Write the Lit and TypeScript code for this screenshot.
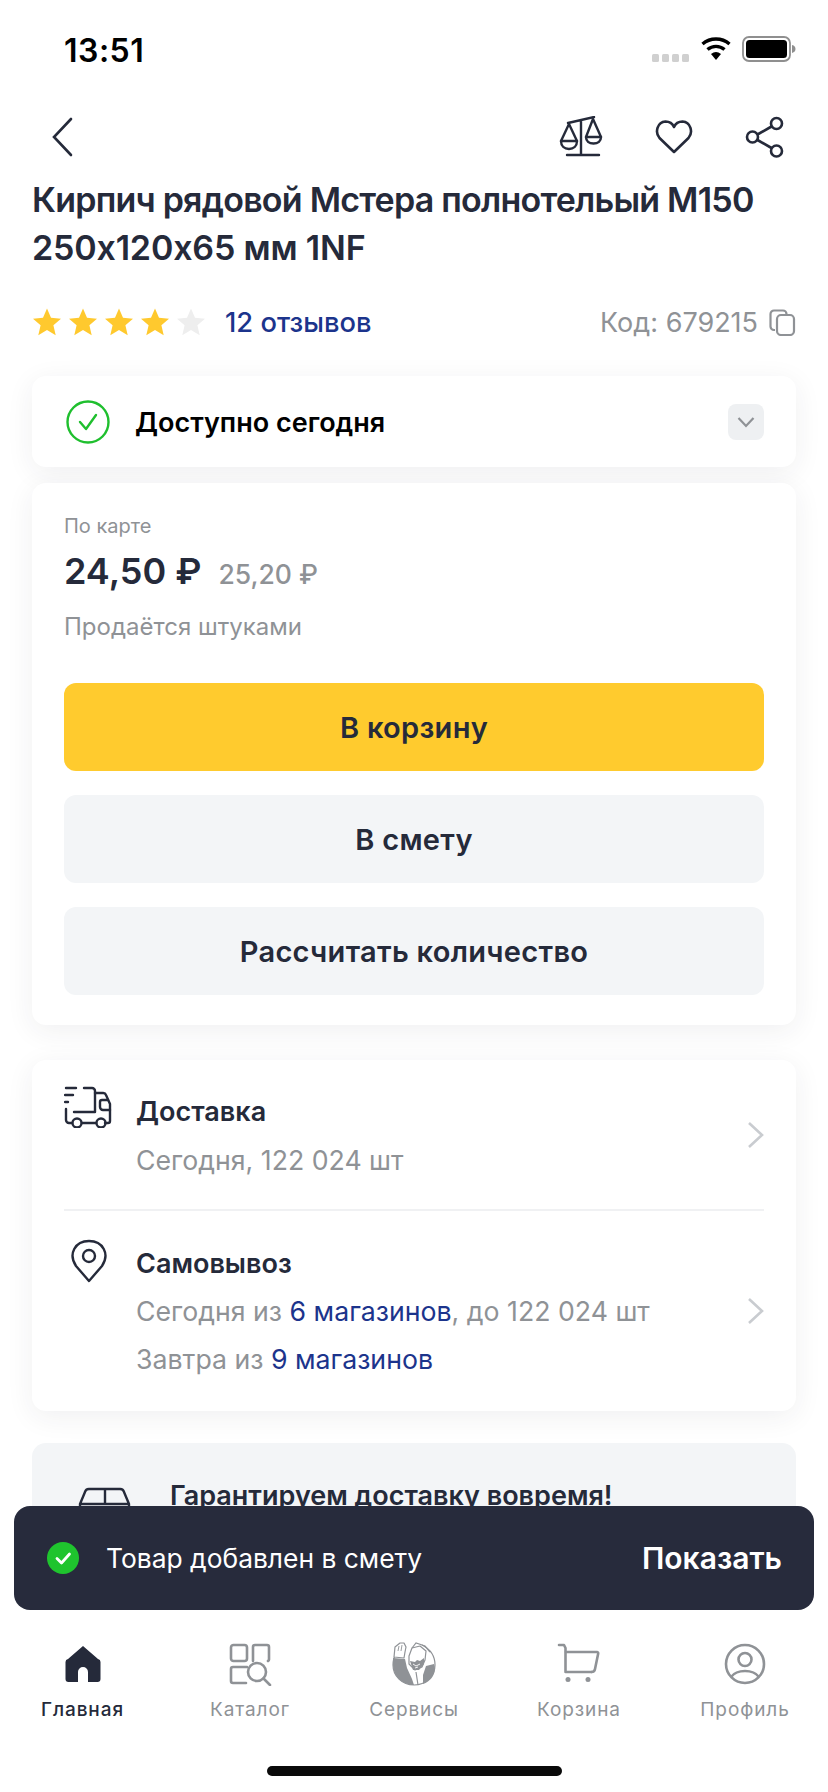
import { LitElement, html, css, svg } from 'lit';
import { customElement } from 'lit/decorators.js';

const DARK = '#252a3a';
const GRAY = '#8f9296';

const star = (fill: string) => html`
  <svg width="30" height="30" viewBox="0 0 30 30">
    <path fill=${fill} d="M15 1.500l4 9.200 10 1-7.600 6.600 2.300 9.900L15 23l-8.700 5.200 2.300-9.900L1 11.700l10-1z" />
  </svg>
`;

const chevron = html`
  <svg width="18" height="28" viewBox="0 0 18 28" fill="none" stroke="#c9ccd0" stroke-width="2.600">
    <path d="M3 2l13 12L3 26" />
  </svg>
`;

const tabIcons: Record<string, unknown> = {
  home: html`<svg width="44" height="44" viewBox="0 0 44 44">
    <path fill=${DARK} d="M22 4L37 17a3 3 0 0 1 2.500 3V37a3 3 0 0 1-3 3H27V30a5 5 0 0 0-10 0V40H7.500a3 3 0 0 1-3-3V20a3 3 0 0 1 2.500-3z" />
  </svg>`,
  catalog: html`<svg width="44" height="44" viewBox="0 0 44 44" fill="none" stroke=${GRAY} stroke-width="2.600" stroke-linecap="round" stroke-linejoin="round">
    <rect x="3" y="3" width="16" height="16" rx="2.500" />
    <path d="M25 19V5a2 2 0 0 1 2-2h12a2 2 0 0 1 2 2v12a2 2 0 0 1-1 2" />
    <path d="M19 25H5a2 2 0 0 0-2 2v12a2 2 0 0 0 2 2h13" />
    <circle cx="29" cy="30" r="9" />
    <path d="M35.500 36.500L42 43" />
  </svg>`,
  services: html`<svg width="44" height="44" viewBox="0 0 44 44">
    <path fill="none" stroke=${GRAY} stroke-width="1.200" d="M14 5C5 8 1 15 1 23c0 11 9 20 21 20s21-9 21-20c0-9-5-16-13-20" />
    <path fill=${GRAY} d="M1 16l12 1 2 9 5 11 2 6C10 43 1 34 1 22z" />
    <path fill=${GRAY} d="M31 33l3-9 8-2c3 8-2 17-11 20z" />
    <path fill="#fff" stroke=${GRAY} stroke-width="1.200" stroke-linejoin="round" d="M2 15l1-10 5-4 4 0 2 4-1 5-1 6z" />
    <path fill="none" stroke=${GRAY} stroke-width="0.900" d="M6 9l1-5M9 9l1-6" />
    <path fill="#fff" stroke=${GRAY} stroke-width="1.200" stroke-linejoin="round" d="M17 14l3-8 8-2 6 5-1 9-3 7-7 3-6-6z" />
    <path fill=${GRAY} d="M18 19l5 1 2-2 3 1 4-3 0 6-5 6-6 0z" />
    <path fill="none" stroke="#fff" stroke-width="0.900" d="M21 22l3 2 4-2M23 26l3-1" />
    <path fill="none" stroke=${GRAY} stroke-width="1.200" d="M20 6l4-5 9 3 5 6M24 30l2 13" />
  </svg>`,
  cart: html`<svg width="44" height="44" viewBox="0 0 44 44" fill="none" stroke=${GRAY} stroke-width="2.600" stroke-linecap="round" stroke-linejoin="round">
    <path d="M2 3h5l1.500 3v24h26" />
    <path d="M9 10h31a1.200 1.200 0 0 1 1.200 1.500L38 27a3.500 3.500 0 0 1-3.500 3" />
    <circle cx="11" cy="37.500" r="2.500" fill=${GRAY} stroke="none" />
    <circle cx="31" cy="37.500" r="2.500" fill=${GRAY} stroke="none" />
  </svg>`,
  profile: html`<svg width="44" height="44" viewBox="0 0 44 44" fill="none" stroke=${GRAY} stroke-width="2.600">
    <circle cx="22" cy="22" r="19" />
    <circle cx="22" cy="17.500" r="6.500" />
    <path d="M8 35c3-4 8-6 14-6s11 2 14 6" />
  </svg>`,
};

const tabs = [
  { id: 'home', label: 'Главная', active: true },
  { id: 'catalog', label: 'Каталог', active: false },
  { id: 'services', label: 'Сервисы', active: false },
  { id: 'cart', label: 'Корзина', active: false },
  { id: 'profile', label: 'Профиль', active: false },
];

@customElement('app-root')
export class AppRoot extends LitElement {
  static styles = css`
    :host {
      display: block;
      width: 828px;
      height: 1792px;
      overflow: hidden;
      position: relative;
      background: #fff;
      font-family: Inter, 'Noto Sans', sans-serif;
      color: #252a3a;
    }

    .page {
      height: 100%;
      display: flex;
      flex-direction: column;
    }

    .status {
      height: 98px;
      flex: none;
      display: flex;
      align-items: center;
      justify-content: space-between;
      padding: 0 32px 0 64px;
      box-sizing: border-box;
    }

    .time {
      font-size: 32px;
      font-weight: 600;
      color: #000;
      letter-spacing: 0.5px;
      margin-top: 2px;
    }

    .status-right {
      display: flex;
      align-items: center;
      gap: 10px;
    }

    .signal {
      margin-top: 19px;
    }

    .nav {
      height: 78px;
      flex: none;
      display: flex;
      align-items: center;
      justify-content: space-between;
      padding: 0 43px 0 50px;
      box-sizing: border-box;
    }

    .nav-actions {
      display: flex;
      align-items: center;
      gap: 52px;
    }

    .content {
      flex: 1;
      min-height: 0;
      overflow: hidden;
    }

    h1 {
      margin: 0;
      padding: 0 32px;
      font-size: 34px;
      line-height: 48px;
      font-weight: 600;
      letter-spacing: -0.77px;
      color: #252a3a;
      white-space: nowrap;
    }

    h1 span {
      letter-spacing: -0.17px;
    }

    .meta {
      display: flex;
      align-items: center;
      justify-content: space-between;
      padding: 0 32px;
      margin-top: 28px;
      height: 44px;
    }

    .rating {
      display: flex;
      align-items: center;
    }

    .stars {
      display: flex;
      gap: 6px;
      margin-right: 19px;
    }

    .reviews {
      font-size: 27.300px;
      font-weight: 500;
      color: #1c348c;
    }

    .code {
      display: flex;
      align-items: center;
      gap: 11px;
      font-size: 27px;
      color: #8f9296;
    }

    .card {
      margin: 0 32px;
      background: #fff;
      border-radius: 14px;
      box-shadow: 0 6px 28px rgba(37, 42, 58, 0.07);
    }

    .avail {
      margin-top: 32px;
      height: 91px;
      box-sizing: border-box;
      padding: 0 32px 0 34px;
      display: flex;
      align-items: center;
    }

    .avail-text {
      margin: 2px 0 0 25px;
      flex: 1;
      font-size: 27px;
      font-weight: 600;
      color: #000;
    }

    .avail-toggle {
      width: 36px;
      height: 36px;
      border-radius: 8px;
      background: #eef0f2;
      display: flex;
      align-items: center;
      justify-content: center;
    }

    .buy {
      margin-top: 16px;
      padding: 31px 32px 32px;
      height: 542px;
      box-sizing: border-box;
      display: flex;
      flex-direction: column;
    }

    .by-card {
      font-size: 20px;
      line-height: 24px;
      color: #8f9296;
    }

    .prices {
      display: flex;
      align-items: baseline;
      gap: 17px;
      margin-top: 8px;
    }

    .price {
      font-size: 36px;
      line-height: 50px;
      font-weight: 600;
      color: #252a3a;
    }

    .old-price {
      font-size: 26.500px;
      font-weight: 500;
      color: #8f9296;
    }

    .unit {
      margin-top: 15px;
      font-size: 24px;
      line-height: 32px;
      color: #8f9296;
    }

    .btn {
      height: 88px;
      flex: none;
      border-radius: 12px;
      background: #f3f5f7;
      display: flex;
      align-items: center;
      justify-content: center;
      font-size: 29px;
      font-weight: 600;
      letter-spacing: 0.3px;
      color: #252a3a;
      margin-top: 24px;
    }

    .btn.primary {
      background: #ffcb2e;
      margin-top: 40px;
    }

    .ship {
      margin-top: 35px;
      height: 351px;
      box-sizing: border-box;
      padding: 0 32px;
    }

    .ship-row {
      display: flex;
      align-items: center;
    }

    .ship-row.delivery {
      height: 149px;
      border-bottom: 2px solid #f0f1f3;
    }

    .ship-row.pickup {
      height: 200px;
    }

    .ship-icon {
      width: 72px;
      flex: none;
      align-self: flex-start;
    }

    .delivery .ship-icon {
      margin-top: 26px;
    }

    .pickup .ship-icon {
      margin-top: 28px;
      padding-left: 6px;
      width: 66px;
    }

    .ship-body {
      flex: 1;
      align-self: flex-start;
    }

    .delivery .ship-body {
      padding-top: 34px;
    }

    .pickup .ship-body {
      padding-top: 35px;
    }

    .ship-title {
      font-size: 27px;
      line-height: 36px;
      font-weight: 600;
      color: #252a3a;
    }

    .ship-line {
      font-size: 26.700px;
      line-height: 48px;
      color: #8f9296;
    }

    .delivery .ship-line {
      margin-top: 6px;
    }

    .pickup .ship-title + .ship-line {
      margin-top: 5px;
    }

    .ship-line a {
      color: #1c348c;
      text-decoration: none;
    }

    .guarantee {
      margin: 32px 32px 0;
      height: 160px;
      background: #f3f5f7;
      border-radius: 14px;
      display: flex;
      align-items: flex-start;
      padding: 37px 0 0 46px;
      box-sizing: border-box;
    }

    .guarantee svg {
      flex: none;
      margin-top: 7px;
    }

    .guarantee-text {
      margin-left: 38px;
      font-size: 27px;
      line-height: 32px;
      font-weight: 600;
      color: #252a3a;
    }

    .toast {
      position: absolute;
      left: 14px;
      right: 14px;
      top: 1506px;
      height: 104px;
      box-sizing: border-box;
      border-radius: 16px;
      background: #272b3c;
      display: flex;
      align-items: center;
      padding: 0 32px 0 33px;
      color: #fff;
    }

    .toast-text {
      flex: 1;
      margin-left: 27px;
      font-size: 26.400px;
    }

    .toast-action {
      font-size: 30px;
      font-weight: 600;
    }

    .tabbar {
      flex: none;
      height: 184px;
      background: #fff;
      box-sizing: border-box;
      padding: 34px 0 0;
      position: relative;
      display: grid;
      grid-template-columns: 165px 170px 158px 172px 160px;
    }

    .tab {
      display: flex;
      flex-direction: column;
      align-items: center;
      font-size: 19px;
      line-height: 24px;
      letter-spacing: 0.9px;
      color: #8f9296;
    }

    .tab.active {
      color: #252a3a;
      font-weight: 500;
    }

    .tab span {
      margin-top: 12px;
    }

    .home-bar {
      position: absolute;
      left: 267px;
      top: 158px;
      width: 295px;
      height: 10px;
      border-radius: 5px;
      background: #0a0a0a;
    }
  `;

  render() {
    return html`
      <div class="page">
        <div class="status">
          <span class="time">13:51</span>
          <div class="status-right">
            <svg class="signal" width="38" height="12" viewBox="0 0 38 12">
              ${[0, 10, 20, 30].map((x) => svg`<rect x=${x} y="1" width="7" height="8" rx="1.500" fill="#d0d0d0" />`)}
            </svg>
            <svg width="32" height="24" viewBox="0 0 32 24">
              <path d="M16 23l-5-6a8 8 0 0 1 10 0z" />
              <path fill="none" stroke="#000" stroke-width="3.400" d="M7.500 12.500a13 13 0 0 1 17 0M2.500 7a20.500 20.500 0 0 1 27 0" />
            </svg>
            <svg width="54" height="26" viewBox="0 0 54 26">
              <rect x="1" y="1" width="47" height="24" rx="6" fill="none" stroke="#8f8f8f" stroke-width="1.800" />
              <rect x="4" y="4" width="41" height="18" rx="3.500" fill="#000" />
              <path d="M50 9c2.500 .6 3.500 2.200 3.500 4s-1 3.400-3.500 4z" fill="#8f8f8f" />
            </svg>
          </div>
        </div>

        <div class="nav">
          <svg width="24" height="40" viewBox="0 0 24 40" fill="none" stroke="#252a3a" stroke-width="2.600" stroke-linecap="round">
            <path d="M21 2L4 20l17 18" />
          </svg>
          <div class="nav-actions">
            <svg width="44" height="42" viewBox="0 0 44 42" fill="none" stroke="#252a3a" stroke-width="2.400" stroke-linecap="round" stroke-linejoin="round">
              <path d="M9 7L35 1M22 4v34M8 39h32" />
              <path d="M10 8L2 25h16z" />
              <path d="M2 25c0 5 3.500 8 8 8s8-3 8-8" />
              <path d="M34 3l-7 18h15z" />
              <path d="M27 21c0 4 3 6.500 7.500 6.500S42 25 42 21" />
            </svg>
            <svg width="38" height="36" viewBox="0 0 38 36" fill="none" stroke="#252a3a" stroke-width="2.600" stroke-linejoin="round">
              <path d="M19 33L4.500 19C-.5 13 2.500 3 10.500 2.500c4 0 7 2 8.500 5.500 1.500-3.500 4.500-5.500 8.500-5.500C35.500 3 38.500 13 33.500 19z" />
            </svg>
            <svg width="40" height="42" viewBox="0 0 40 42" fill="none" stroke="#252a3a" stroke-width="2.600">
              <circle cx="31.500" cy="7.500" r="5.500" />
              <circle cx="7.500" cy="21" r="5.500" />
              <circle cx="31.500" cy="35" r="5.500" />
              <path d="M12.500 18.500l14-8M12.500 24l14 8" />
            </svg>
          </div>
        </div>

        <div class="content">
          <h1>Кирпич рядовой Мстера полнотельый М150<br /><span>250х120х65 мм 1NF</span></h1>

          <div class="meta">
            <div class="rating">
              <div class="stars">
                ${[1, 2, 3, 4, 5].map((n) => star(n <= 4 ? '#ffc92e' : '#eeeeee'))}
              </div>
              <span class="reviews">12 отзывов</span>
            </div>
            <div class="code">
              <span>Код: 679215</span>
              <svg width="27" height="27" viewBox="0 0 27 27" fill="none" stroke="#8f9296" stroke-width="2.200">
                <rect x="8" y="6" width="17" height="20" rx="4" />
                <path d="M6 21H5a3.500 3.500 0 0 1-3.500-3.500V5A3.500 3.500 0 0 1 5 1.500h9A3.500 3.500 0 0 1 17.500 5" />
              </svg>
            </div>
          </div>

          <div class="card avail">
            <svg width="44" height="44" viewBox="0 0 44 44" fill="none" stroke="#1fbf2e" stroke-width="2.400" stroke-linecap="round" stroke-linejoin="round">
              <circle cx="22" cy="22" r="20.500" />
              <path d="M14 22l6 7 10-14" />
            </svg>
            <span class="avail-text">Доступно сегодня</span>
            <div class="avail-toggle">
              <svg width="18" height="12" viewBox="0 0 18 12" fill="none" stroke="#8f9296" stroke-width="2.200">
                <path d="M1.500 2L9 10l7.500-8" />
              </svg>
            </div>
          </div>

          <div class="card buy">
            <div class="by-card">По карте</div>
            <div class="prices">
              <span class="price">24,50 ₽</span>
              <span class="old-price">25,20 ₽</span>
            </div>
            <div class="unit">Продаётся штуками</div>
            <div class="btn primary">В корзину</div>
            <div class="btn">В смету</div>
            <div class="btn">Рассчитать количество</div>
          </div>

          <div class="card ship">
            <div class="ship-row delivery">
              <div class="ship-icon">
                <svg width="48" height="42" viewBox="0 0 48 42" fill="none" stroke="#252a3a" stroke-width="2.400" stroke-linecap="round" stroke-linejoin="round">
                  <path d="M2 2h10M1 9h8M1 16h3" />
                  <path d="M20 2h8a3 3 0 0 1 3 3v21H10" />
                  <path d="M2 23v11a3 3 0 0 0 3 3h3M18 37h14M41 37h3a2 2 0 0 0 2-2V18l-4-9a3 3 0 0 0-3-2h-8" />
                  <path d="M46 24h-7a3 3 0 0 1-3-3v-5a2 2 0 0 1 2-2h6" />
                  <circle cx="13" cy="37" r="4.500" />
                  <circle cx="37" cy="37" r="4.500" />
                </svg>
              </div>
              <div class="ship-body">
                <div class="ship-title">Доставка</div>
                <div class="ship-line">Сегодня, 122 024 шт</div>
              </div>
              ${chevron}
            </div>
            <div class="ship-row pickup">
              <div class="ship-icon">
                <svg width="38" height="44" viewBox="0 0 38 44" fill="none" stroke="#252a3a" stroke-width="2.400" stroke-linejoin="round">
                  <path d="M19 42L6 27C-2 15 5 2 19 2s21 13 13 25z" />
                  <circle cx="19" cy="17" r="6" />
                </svg>
              </div>
              <div class="ship-body">
                <div class="ship-title">Самовывоз</div>
                <div class="ship-line">Сегодня из <a>6 магазинов</a>, до 122 024 шт</div>
                <div class="ship-line">Завтра из <a>9 магазинов</a></div>
              </div>
              ${chevron}
            </div>
          </div>

          <div class="guarantee">
            <svg width="54" height="40" viewBox="0 0 54 40" fill="none" stroke="#252a3a" stroke-width="2.400" stroke-linejoin="round">
              <path d="M2 17L7 5a4 4 0 0 1 4-3H42a4 4 0 0 1 4 3L51 17V36H2zM2 17H51M27 2V17" />
            </svg>
            <div class="guarantee-text">Гарантируем доставку вовремя!</div>
          </div>
        </div>

        <div class="tabbar">
          ${tabs.map(
            (t) => html`
              <div class="tab ${t.active ? 'active' : ''}">
                ${tabIcons[t.id]}
                <span>${t.label}</span>
              </div>
            `,
          )}
          <div class="home-bar"></div>
        </div>
      </div>

      <div class="toast">
        <svg width="32" height="32" viewBox="0 0 32 32">
          <circle cx="16" cy="16" r="16" fill="#1fc42e" />
          <path d="M10 16.500l4.500 4.500L22.500 12" fill="none" stroke="#fff" stroke-width="2.800" stroke-linecap="round" stroke-linejoin="round" />
        </svg>
        <span class="toast-text">Товар добавлен в смету</span>
        <span class="toast-action">Показать</span>
      </div>
    `;
  }
}
